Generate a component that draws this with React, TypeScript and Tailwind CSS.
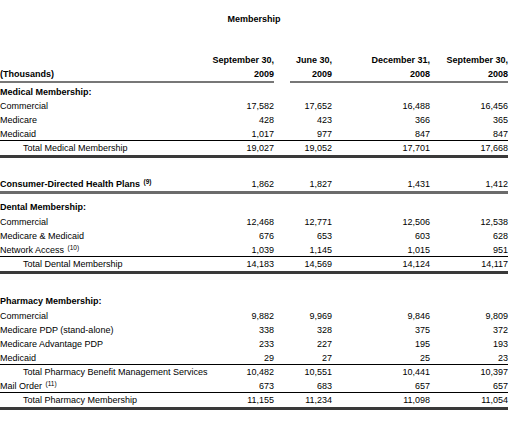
type Line = "none" | "thin" | "thick" | "gray";

type RowProps = {
    label: React.ReactNode;
    vals?: string[];
    indent?: boolean;
    bold?: boolean;
    line?: Line;
    className?: string;
};

// thin lines sit inside the 14px row, thick ones hang below it
const lineClass: Record<Line, string> = {
    none: "h-[14px]",
    thin: "h-[14px] border-b border-black",
    thick: "border-b-[3px] border-[#3a3a3a]",
    gray: "border-b-[3px] border-[#6b6b6b]",
};

function Sup({ n }: { n: string }) {
    return <span className="relative -top-[3px] ml-[1px] text-[6.5px] leading-none">({n})</span>;
}

function Row({ label, vals, indent, bold, line = "none", className = "" }: RowProps) {
    return (
        <div className={`flex leading-[14px] ${lineClass[line]} ${className}`}>
            <div className={`w-[212px] h-[14px] whitespace-nowrap ${indent ? "pl-[23px]" : ""} ${bold ? "font-bold" : ""}`}>
                {label}
            </div>
            {vals && (
                <>
                    <div className="w-[62px] text-right">{vals[0]}</div>
                    <div className="w-[58px] text-right">{vals[1]}</div>
                    <div className="w-[98px] text-right">{vals[2]}</div>
                    <div className="w-[78px] text-right">{vals[3]}</div>
                </>
            )}
        </div>
    );
}

export default function App() {
    return (
        <div
            className="w-[511px] h-[428px] bg-white text-black text-[9px] leading-[14px]"
            style={{ fontFamily: '"Liberation Sans", Arial, sans-serif' }}
        >
            <div className="w-[508px]">
                <div className="pt-[12px] h-[53px] text-center font-bold">Membership</div>

                {/* header */}
                <div className="flex font-bold">
                    <div className="flex w-[274px] border-b-2 border-[#777]">
                        <div className="w-[212px] flex items-end h-[28px]">(Thousands)</div>
                        <div className="w-[62px] text-right">
                            <div className="h-[14px] whitespace-nowrap">September 30,</div>
                            <div className="h-[14px]">2009</div>
                        </div>
                    </div>
                    <div className="w-[16px]" />
                    <div className="flex w-[218px] border-b-2 border-[#777]">
                        <div className="w-[42px] text-right">
                            <div className="h-[14px] whitespace-nowrap">June 30,</div>
                            <div className="h-[14px]">2009</div>
                        </div>
                        <div className="w-[98px] text-right">
                            <div className="h-[14px]">December 31,</div>
                            <div className="h-[14px]">2008</div>
                        </div>
                        <div className="w-[78px] text-right">
                            <div className="h-[14px] whitespace-nowrap">September 30,</div>
                            <div className="h-[14px]">2008</div>
                        </div>
                    </div>
                </div>

                {/* medical */}
                <Row label="Medical Membership:" bold className="mt-[2px]" />
                <Row label="Commercial" vals={["17,582", "17,652", "16,488", "16,456"]} />
                <Row label="Medicare" vals={["428", "423", "366", "365"]} />
                <Row label="Medicaid" vals={["1,017", "977", "847", "847"]} line="thin" />
                <Row label="Total Medical Membership" indent vals={["19,027", "19,052", "17,701", "17,668"]} line="thick" />

                <Row
                    label={<>Consumer-Directed Health Plans <Sup n="9" /></>}
                    bold
                    vals={["1,862", "1,827", "1,431", "1,412"]}
                    line="gray"
                    className="mt-[19px]"
                />

                {/* dental */}
                <Row label="Dental Membership:" bold className="mt-[6px]" />
                <Row label="Commercial" vals={["12,468", "12,771", "12,506", "12,538"]} className="mt-[1px]" />
                <Row label="Medicare & Medicaid" vals={["676", "653", "603", "628"]} />
                <Row label={<>Network Access <Sup n="10" /></>} vals={["1,039", "1,145", "1,015", "951"]} line="thin" />
                <Row label="Total Dental Membership" indent vals={["14,183", "14,569", "14,124", "14,117"]} line="thick" />

                {/* pharmacy */}
                <Row label="Pharmacy Membership:" bold className="mt-[20px]" />
                <Row label="Commercial" vals={["9,882", "9,969", "9,846", "9,809"]} className="mt-[1px]" />
                <Row label="Medicare PDP (stand-alone)" vals={["338", "328", "375", "372"]} />
                <Row label="Medicare Advantage PDP" vals={["233", "227", "195", "193"]} />
                <Row label="Medicaid" vals={["29", "27", "25", "23"]} line="thin" />
                <Row label="Total Pharmacy Benefit Management Services" indent vals={["10,482", "10,551", "10,441", "10,397"]} />
                <Row label={<>Mail Order <Sup n="11" /></>} vals={["673", "683", "657", "657"]} line="thin" />
                <Row label="Total Pharmacy Membership" indent vals={["11,155", "11,234", "11,098", "11,054"]} line="thick" />
            </div>
        </div>
    );
}
